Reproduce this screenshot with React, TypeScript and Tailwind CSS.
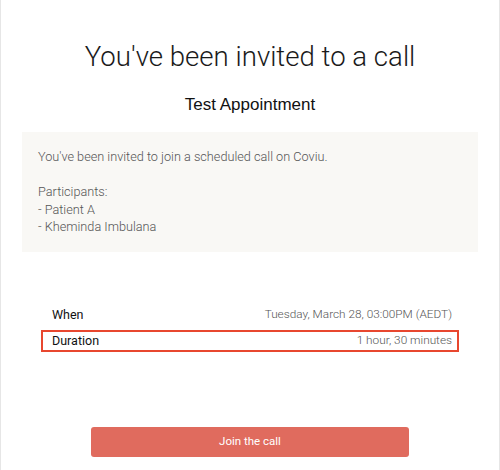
export default function App() {
  return (
    <div className="w-[500px] h-[470px] bg-white border-x border-[#e6e6e6] overflow-hidden" style={{ fontFamily: 'Roboto, "Liberation Sans", Arial, sans-serif' }}>
      <div className="pt-[39px] text-center text-[27.6px] leading-[36px] text-[#1a1a1a] font-light">
        You've been invited to a call
      </div>
      <div className="mt-[18px] text-center text-[17px] leading-[24px] text-[#111] font-medium" style={{ fontFamily: '"Liberation Sans", Arial, sans-serif' }}>
        Test Appointment
      </div>
      <div className="mt-[15px] mx-[21px] h-[120px] bg-[#f9f8f5] px-[16px] pt-[16px] text-[12.7px] leading-[17.5px] text-[#555] font-light">
        <div>You've been invited to join a scheduled call on Coviu.</div>
        <div>&nbsp;</div>
        <div>Participants:</div>
        <div>- Patient A</div>
        <div>- Kheminda Imbulana</div>
      </div>
      <div className="mt-[52px] mx-[40px] flex flex-col gap-[4px]">
        <div className="h-[22px] flex items-center justify-between border-2 border-transparent pl-[9px] pr-[5px]">
          <span className="text-[#111] text-[12.5px] font-normal">When</span>
          <span className="text-[#555] text-[11.8px] font-light">Tuesday, March 28, 03:00PM (AEDT)</span>
        </div>
        <div className="h-[22px] flex items-center justify-between border-2 border-[#e8472f] pl-[9px] pr-[5px]">
          <span className="text-[#111] text-[12.5px] font-normal">Duration</span>
          <span className="text-[#555] text-[11.8px] font-light">1 hour, 30 minutes</span>
        </div>
      </div>
      <div className="mt-[75px] flex justify-center">
        <button className="w-[318px] h-[30px] rounded-[3px] bg-[#e06b5e] text-white text-[11.5px]">
          Join the call
        </button>
      </div>
    </div>
  );
}
